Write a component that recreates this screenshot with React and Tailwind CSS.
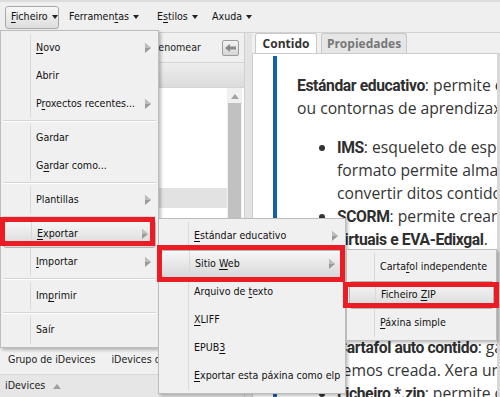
import React from 'react';

const font = "font-['DejaVu_Sans_Condensed','DejaVu_Sans',sans-serif]";

const Arrow = () => (
  <svg width="6" height="10" viewBox="0 0 6 10" className="shrink-0">
    <polygon points="0,0 6,5 0,10" fill="#9a9a9a" />
    <polygon points="0,0 6,5 0,5" fill="#bdbdbd" />
  </svg>
);

const Caret = () => (
  <svg width="6" height="4" viewBox="0 0 6 4" className="shrink-0">
    <polygon points="0,0 6,0 3,4" fill="#222" />
  </svg>
);

const Item = ({ children, arrow, active, gutter }) => (
  <div
    className={
      'relative flex h-[28px] items-center ' +
      (active ? 'mx-[2px] rounded-[3px] border border-[#b5b5b5] bg-gradient-to-b from-[#f7f7f7] to-[#d8d8d8]' : '')
    }
  >
    <div className={gutter + ' h-full shrink-0 border-r border-[#d9d9d9]'} />
    <div className="flex-1 whitespace-nowrap pl-[5px] text-[10.6px] text-[#111]">{children}</div>
    {arrow && (
      <div className="pr-[7px]">
        <Arrow />
      </div>
    )}
  </div>
);

const Sep = () => (
  <div className="flex h-[6px] flex-col justify-center px-[2px]">
    <div className="h-px bg-[#d6d6d6]" />
    <div className="h-px bg-white" />
  </div>
);

const U = ({ children }) => <span className="underline underline-offset-[2px]">{children}</span>;

const B = ({ children }) => (
  <b className="font-['Roboto',sans-serif] font-bold tracking-[-0.4px] text-[#2e2e2e]">{children}</b>
);

const Red = ({ className }) => (
  <div className={'pointer-events-none absolute border-[5px] border-[#ec1c24] ' + className} />
);

export default function App() {
  return (
    <div className={font + ' relative h-[397px] w-[500px] overflow-hidden bg-[#f0f0f0]'}>
      {/* menubar */}
      <div className="flex h-[33px] items-center border-t-[2px] border-b border-t-[#dcdcdc] border-b-[#d2d2d2] bg-[#efefef] pl-[5px] text-[10.6px] text-[#111]">
        <div className="flex h-[23px] w-[54px] items-center gap-[4px] rounded-[3px] border border-[#a9a9a9] bg-gradient-to-b from-[#f7f7f7] to-[#dedede] pl-[5px]">
          <span><U>F</U>icheiro</span>
          <Caret />
        </div>
        <div className="ml-[10px] flex w-[70px] items-center gap-[4px]">
          <span>Ferramen<U>t</U>as</span>
          <Caret />
        </div>
        <div className="ml-[18px] flex w-[40px] items-center gap-[4px]">
          <span>E<U>s</U>tilos</span>
          <Caret />
        </div>
        <div className="ml-[15px] flex items-center gap-[4px]">
          <span>Axuda</span>
          <Caret />
        </div>
      </div>

      <div className="flex h-[364px]">
        {/* left panel */}
        <div className="flex w-[245px] shrink-0 flex-col border-r border-[#cfcfcf] text-[10.6px] text-[#222]">
          <div className="flex h-[29px] items-center justify-end gap-[21px] pr-[5px]">
            <span>Renomear</span>
            <div className="flex h-[16px] w-[17px] items-center justify-center rounded-[2px] border border-[#9c9c9c] bg-gradient-to-b from-[#f4f4f4] to-[#d6d6d6]">
              <svg width="11" height="8" viewBox="0 0 11 8">
                <polygon points="0,4 5,0 5,2.5 11,2.5 11,5.5 5,5.5 5,8" fill="#8a8a8a" />
              </svg>
            </div>
          </div>
          <div className="h-[26px] border-y border-[#d4d4d4] bg-gradient-to-b from-[#eeeeee] to-[#dcdcdc]" />
          <div className="flex h-[257px] bg-white">
            <div className="flex-1 pt-[100px]">
              <div className="h-[20px] bg-[#e2e2e2]" />
            </div>
            <div className="flex w-[15px] flex-col items-center bg-[#f0f0f0] pt-[6px]">
              <svg width="8" height="5" viewBox="0 0 8 5">
                <polygon points="0,5 4,0 8,5" fill="#a3a3a3" />
              </svg>
              <div className="mt-[4px] w-[13px] flex-1 bg-[#c1c1c1]" />
            </div>
            <div className="w-[2px] bg-white" />
          </div>
          <div className="flex h-[30px] items-center gap-[16px] overflow-hidden whitespace-nowrap border-b border-[#d6d6d6] pl-[8px]">
            <span>Grupo de iDevices</span>
            <span>iDevices de usuario</span>
          </div>
          <div className="flex flex-1 items-center gap-[8px] bg-[#e6e6e6] pl-[5px]">
            <span>iDevices</span>
            <svg width="8" height="5" viewBox="0 0 8 5">
              <polygon points="0,5 4,0 8,5" fill="#9e9e9e" />
            </svg>
          </div>
        </div>
        <div className="w-[7px] shrink-0 bg-[#e4e4e4]" />

        {/* content */}
        <div className="flex min-w-0 flex-1 flex-col">
          <div className="flex h-[22px] items-end gap-[4px] pl-[3px] font-['Open_Sans',sans-serif] text-[12px] font-bold">
            <div className="flex h-[20px] w-[62px] items-center justify-center rounded-t-[3px] border border-b-0 border-[#c8c8c8] bg-white text-[#333]">
              Contido
            </div>
            <div className="flex h-[20px] w-[86px] items-center justify-center rounded-t-[3px] border border-b-0 border-[#c8c8c8] bg-[#e6e6e6] text-[#777]">
              Propiedades
            </div>
          </div>
          <div className="flex min-w-0 flex-1 border-l border-t border-r-[3px] border-[#cdcdcd] border-r-[#d8d8d8] bg-white pl-[20px] pt-[2px] font-['Open_Sans',sans-serif] text-[15.7px] leading-[23px] text-[#333]">
            <div className="w-[4px] shrink-0 bg-[#1560ab]" />
            <div className="min-w-0 flex-1 overflow-hidden whitespace-nowrap pl-[20px] pt-[18px]">
              <div><B>Estándar educativo</B>: permite exportar o contido a distintas plataformas</div>
              <div>ou contornas de aprendizaxe virtuais.</div>
              <ul className="mt-[16px] list-disc pl-[40px]">
                <li>
                  <div><B>IMS</B>: esqueleto de especificación de contidos. Este</div>
                  <div>formato permite almacenar os contidos e</div>
                  <div>convertir ditos contidos noutros formatos.</div>
                </li>
                <li>
                  <div><B>SCORM</B>: permite crear paquetes para as aulas</div>
                  <div><B>virtuais e EVA-Edixgal</B>.</div>
                </li>
              </ul>
              <div className="mt-[14px]"><B>Sitio Web</B>: exporta o contido como páxinas web</div>
              <div>que se poden ver nun navegador.</div>
              <ul className="mt-[25px] list-disc pl-[40px]">
                <li>
                  <div><B>Cartafol auto contido</B>: garda o proxecto tal como o</div>
                  <div>temos creada. Xera un cartafol con todo.</div>
                </li>
                <li>
                  <div><B>Ficheiro *.zip</B>: permite descargar o contido</div>
                </li>
              </ul>
            </div>
          </div>
        </div>
      </div>

      {/* Ficheiro menu */}
      <div className="absolute left-0 top-[30px] w-[159px] border border-[#bdbdbd] bg-[#f0f0f0] py-[3px] shadow-[2px_2px_3px_rgba(0,0,0,0.25)]">
        <Item gutter="w-[30px]" arrow><U>N</U>ovo</Item>
        <Item gutter="w-[30px]">Abrir</Item>
        <Item gutter="w-[30px]" arrow>P<U>r</U>oxectos recentes...</Item>
        <Sep />
        <Item gutter="w-[30px]">Gardar</Item>
        <Item gutter="w-[30px]">G<U>a</U>rdar como...</Item>
        <Sep />
        <Item gutter="w-[30px]" arrow>Plantillas</Item>
        <Sep />
        <Item gutter="w-[28px]" arrow active><U>E</U>xportar</Item>
        <Item gutter="w-[30px]" arrow><U>I</U>mportar</Item>
        <Sep />
        <Item gutter="w-[30px]">Im<U>p</U>rimir</Item>
        <Sep />
        <Item gutter="w-[30px]">Saír</Item>
      </div>

      {/* Exportar submenu */}
      <div className="absolute left-[158px] top-[218px] w-[188px] border border-[#bdbdbd] bg-[#f0f0f0] py-[3px] shadow-[2px_2px_3px_rgba(0,0,0,0.25)]">
        <Item gutter="w-[30px]" arrow><U>E</U>stándar educativo</Item>
        <Item gutter="w-[28px]" arrow active>Sitio <U>W</U>eb</Item>
        <Item gutter="w-[30px]">Arquivo de <U>t</U>exto</Item>
        <Item gutter="w-[30px]"><U>X</U>LIFF</Item>
        <Item gutter="w-[30px]">EPUB<U>3</U></Item>
        <Item gutter="w-[30px]"><U>E</U>xportar esta páxina como elp</Item>
      </div>

      {/* Sitio Web submenu */}
      <div className="absolute left-[346px] top-[249px] w-[151px] border border-[#bdbdbd] bg-[#f0f0f0] py-[3px] shadow-[2px_2px_3px_rgba(0,0,0,0.25)]">
        <Item gutter="w-[28px]">Carta<U>f</U>ol independente</Item>
        <Item gutter="w-[26px]" active>Ficheiro <U>Z</U>IP</Item>
        <Item gutter="w-[28px]"><U>P</U>áxina simple</Item>
      </div>

      <Red className="left-0 top-[217px] h-[29px] w-[155px]" />
      <Red className="left-[157px] top-[245px] h-[37px] w-[188px]" />
      <Red className="left-[343px] top-[282px] h-[26px] w-[156px]" />
    </div>
  );
}
